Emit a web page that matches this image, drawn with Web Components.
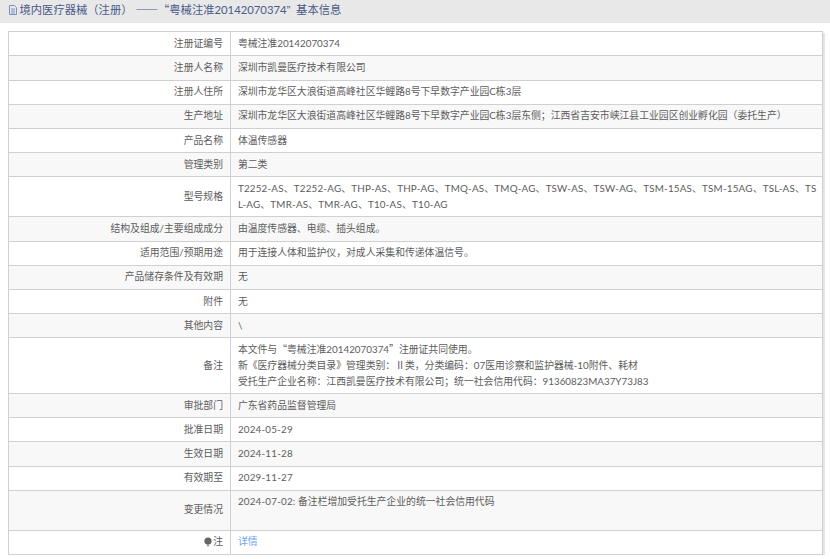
<!DOCTYPE html>
<html lang="zh-CN">
<head>
<meta charset="utf-8">
<title>基本信息</title>
<style>
    html, body { margin: 0; padding: 0; background: #fff; }
    body { font-family: Lato, "Noto Sans CJK SC", sans-serif; overflow: hidden; }
    .q { font-family: "Noto Sans CJK SC", sans-serif; }
    .q.end { font-size: 9.5px; }
    .models { letter-spacing: 0.2px; }
    .date { letter-spacing: 0.2px; }
</style>
</head>
<body>
<reg-page>
    <reg-title slot="title">境内医疗器械（注册） <span class="q">——</span><span class="q">“</span>粤械注准20142070374<span class="q end">”</span>基本信息</reg-title>
    <reg-table>
        <reg-row label="注册证编号">粤械注准20142070374</reg-row>
        <reg-row label="注册人名称" alt>深圳市凯曼医疗技术有限公司</reg-row>
        <reg-row label="注册人住所">深圳市龙华区大浪街道高峰社区华鲤路8号下早数字产业园C栋3层</reg-row>
        <reg-row label="生产地址" alt>深圳市龙华区大浪街道高峰社区华鲤路8号下早数字产业园C栋3层东侧；江西省吉安市峡江县工业园区创业孵化园（委托生产）</reg-row>
        <reg-row label="产品名称">体温传感器</reg-row>
        <reg-row label="管理类别" alt>第二类</reg-row>
        <reg-row label="型号规格"><span class="models">T2252-AS、T2252-AG、THP-AS、THP-AG、TMQ-AS、TMQ-AG、TSW-AS、TSW-AG、TSM-15AS、TSM-15AG、TSL-AS、TSL-AG、TMR-AS、TMR-AG、T10-AS、T10-AG</span></reg-row>
        <reg-row label="结构及组成/主要组成成分" alt>由温度传感器、电缆、插头组成。</reg-row>
        <reg-row label="适用范围/预期用途">用于连接人体和监护仪，对成人采集和传递体温信号。</reg-row>
        <reg-row label="产品储存条件及有效期" alt>无</reg-row>
        <reg-row label="附件">无</reg-row>
        <reg-row label="其他内容" alt>\</reg-row>
        <reg-row label="备注">本文件与<span class="q">“</span>粤械注准20142070374<span class="q">”</span>注册证共同使用。<br>新《医疗器械分类目录》管理类别：Ⅱ类，分类编码：07医用诊察和监护器械-10附件、耗材<br>受托生产企业名称：江西凯曼医疗技术有限公司；统一社会信用代码：91360823MA37Y73J83</reg-row>
        <reg-row label="审批部门" alt>广东省药品监督管理局</reg-row>
        <reg-row label="批准日期"><span class="date">2024-05-29</span></reg-row>
        <reg-row label="生效日期" alt><span class="date">2024-11-28</span></reg-row>
        <reg-row label="有效期至"><span class="date">2029-11-27</span></reg-row>
        <reg-row label="变更情况" alt><span class="date">2024-07-02:</span> 备注栏增加受托生产企业的统一社会信用代码<br>&nbsp;</reg-row>
        <reg-row label="注" pin><a href="#">详情</a></reg-row>
    </reg-table>
</reg-page>
<script>
(function() {
    'use strict';

    class RegPage extends HTMLElement {
        constructor() {
            super();
            this.attachShadow({ mode: 'open' }).innerHTML = `
                <style>
                    :host { display: block; }
                    .main { padding: 8.3px 7px 0 8px; }
                </style>
                <slot name="title"></slot>
                <div class="main"><slot></slot></div>
            `;
        }
    }

    class RegTitle extends HTMLElement {
        constructor() {
            super();
            this.attachShadow({ mode: 'open' }).innerHTML = `
                <style>
                    :host {
                        display: flex;
                        align-items: flex-start;
                        gap: 1.5px;
                        box-sizing: border-box;
                        height: 23px;
                        padding: 1px 0 0 8px;
                        background: #e8e8e8;
                        color: #4a5a8a;
                        font-size: 11.3px;
                        line-height: 16px;
                    }
                    svg { flex: none; width: 10px; height: 12px; margin-top: 3px; }
                    .text { white-space: pre; }
                </style>
                <svg viewBox="0 0 10 12" fill="none" stroke="#7b8fc4" stroke-width="1">
                    <path d="M1.5 1.5h5l2 2v7h-7z"/>
                    <path d="M3 5h4M3 7h4M3 9h4"/>
                </svg>
                <div class="text"><slot></slot></div>
            `;
        }
    }

    class RegTable extends HTMLElement {
        constructor() {
            super();
            this.attachShadow({ mode: 'open' }).innerHTML = `
                <style>
                    :host {
                        display: block;
                        border: 1px solid #d0d0d0;
                        box-shadow: 2px 2px 0 #e4e4e4;
                        color: #5c5c5c;
                        font-size: 9.83px;
                    }
                </style>
                <slot></slot>
            `;
        }
    }

    class RegRow extends HTMLElement {
        constructor() {
            super();
            const label = this.getAttribute('label');
            const pin = this.hasAttribute('pin') ? `
                <svg viewBox="0 0 8 10" width="8" height="10"><circle cx="4" cy="4" r="3.6" fill="#666"/><path fill="#888" d="M2.4 7.4h3.2L4 10z"/></svg>` : '';
            this.attachShadow({ mode: 'open' }).innerHTML = `
                <style>
                    :host {
                        display: grid;
                        grid-template-columns: 221.6px 1fr;
                        line-height: 15.83px;
                        background: ${this.hasAttribute('alt') ? '#f8f8f8' : '#fff'};
                    }
                    :host(:not(:last-child)) { border-bottom: 1px solid #d0d0d0; }
                    .label, .value { padding: 3.68px 6.6px; }
                    .label {
                        display: flex;
                        align-items: center;
                        justify-content: flex-end;
                        gap: 1px;
                        border-right: 1px solid #d0d0d0;
                        white-space: nowrap;
                    }
                    .value { padding-left: 7.3px; padding-right: 5px; word-break: break-all; }
                    ::slotted(a) { color: #6fa5f2; text-decoration: none; }
                </style>
                <div class="label">${pin}${label}</div>
                <div class="value"><slot></slot></div>
            `;
        }
    }

    customElements.define('reg-page', RegPage);
    customElements.define('reg-title', RegTitle);
    customElements.define('reg-table', RegTable);
    customElements.define('reg-row', RegRow);
})();
</script>
</body>
</html>
